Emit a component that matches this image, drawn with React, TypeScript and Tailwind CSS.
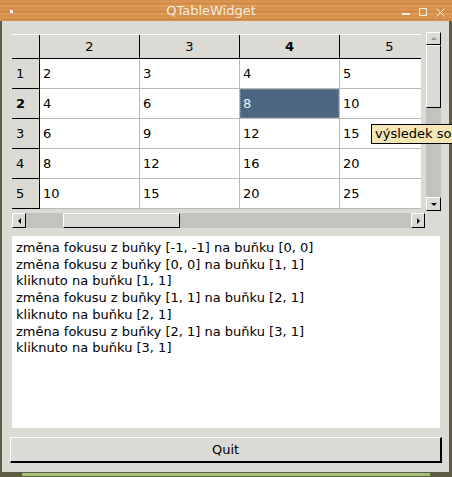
import React from "react";

const font = { fontFamily: '"DejaVu Sans", "Liberation Sans", sans-serif' };

const cols = [2, 3, 4, 5];
const rows = [1, 2, 3, 4, 5];

const log = [
  "změna fokusu z buňky [-1, -1] na buňku [0, 0]",
  "změna fokusu z buňky [0, 0] na buňku [1, 1]",
  "kliknuto na buňku [1, 1]",
  "změna fokusu z buňky [1, 1] na buňku [2, 1]",
  "kliknuto na buňku [2, 1]",
  "změna fokusu z buňky [2, 1] na buňku [3, 1]",
  "kliknuto na buňku [3, 1]",
];

function Arrow({ dir, dim }: { dir: "up" | "down" | "left" | "right"; dim?: boolean }) {
  const pts = {
    up: "0,4 3,1 6,4",
    down: "0,1 6,1 3,4",
    left: "4,0 4,6 1,3",
    right: "1,0 1,6 4,3",
  }[dir];
  const vertical = dir === "up" || dir === "down";
  return (
    <svg width={vertical ? 6 : 5} height={vertical ? 5 : 6} viewBox={vertical ? "0 0 6 5" : "0 0 5 6"}>
      <polygon points={pts} fill={dim ? "#9a9893" : "#000"} />
    </svg>
  );
}

function Btn({ className, children }: { className: string; children?: React.ReactNode }) {
  return (
    <div
      className={`flex items-center justify-center bg-[#dcdad5] border-t border-l border-t-white border-l-white border-b border-r border-b-black border-r-black ${className}`}
    >
      {children}
    </div>
  );
}

export default function App() {
  return (
    <div className="relative w-[452px] h-[477px] bg-[#5d5c45] overflow-hidden" style={font}>
      {/* title bar */}
      <div className="relative h-[21px] flex items-center bg-[repeating-linear-gradient(180deg,#d48a44_0px,#de9c5c_2px,#cf8340_3px,#d99450_5px,#e2a466_6px,#d28944_8px)]">
        <div className="absolute left-[10px] top-[10px] w-[3px] h-[3px] bg-white" />
        <div className="flex-1 text-center text-[13px] text-[#f6ecdf] pr-[30px] leading-none">QTableWidget</div>
        <div className="absolute left-[402px] top-[13px] w-[8px] h-[2px] bg-[#f6ecdf]" />
        <div className="absolute left-[419px] top-[8px] w-[8px] h-[8px] border border-[#f6ecdf]" />
        <svg className="absolute left-[436px] top-[8px]" width="9" height="9" viewBox="0 0 9 9">
          <path d="M0.5 0.5 L8.5 8.5 M8.5 0.5 L0.5 8.5" stroke="#f6ecdf" strokeWidth="1" />
        </svg>
      </div>

      {/* body */}
      <div className="ml-[2px] w-[447px] h-[451px] bg-[#dcdad5] pl-[10px] pt-[11px] flex flex-col">
        <div className="flex">
          <div className="w-[414px] flex flex-col">
            {/* table viewport */}
            <div className="mt-[2px] w-[409px] h-[175px] overflow-hidden text-[13px] text-black">
              <div className="flex h-[25px] border-t border-white bg-[#dcdad5]">
                <div className="w-[28px] shrink-0 border-r border-b border-black" />
                {cols.map((c) => (
                  <div
                    key={c}
                    className={`w-[100px] shrink-0 border-r border-b border-black flex items-center justify-center ${c === 4 ? "font-bold" : ""}`}
                  >
                    {c}
                  </div>
                ))}
              </div>
              {rows.map((r) => (
                <div key={r} className="flex h-[30px]">
                  <div
                    className={`w-[28px] shrink-0 border-r border-b border-black bg-[#dcdad5] flex items-center pl-[4px] ${r === 2 ? "font-bold" : ""}`}
                  >
                    {r}
                  </div>
                  {cols.map((c) => {
                    const sel = r === 2 && c === 4;
                    return (
                      <div
                        key={c}
                        className={`w-[100px] shrink-0 border-r border-b border-[#b9b9b9] flex items-center ${sel ? "bg-white" : "bg-white pl-[3px]"}`}
                      >
                        {sel ? (
                          <div className="w-full h-full bg-[#4b6782] border border-dotted border-[#8a9aaa] text-[#eef2f6] flex items-center pl-[2px]">
                            {r * c}
                          </div>
                        ) : (
                          r * c
                        )}
                      </div>
                    );
                  })}
                </div>
              ))}
            </div>
            {/* horizontal scrollbar */}
            <div className="mt-[4px] w-[413px] h-[15px] flex bg-[#c4c2bd]">
              <Btn className="w-[14px] h-[15px] shrink-0">
                <Arrow dir="left" />
              </Btn>
              <div className="ml-[37px] w-[117px] h-[15px] shrink-0 bg-[#dcdad5] border-t border-l border-white border-b border-r border-b-black border-r-black" />
              <div className="flex-1" />
              <Btn className="w-[14px] h-[15px] shrink-0">
                <Arrow dir="right" />
              </Btn>
            </div>
          </div>
          {/* vertical scrollbar */}
          <div className="w-[15px] h-[179px] flex flex-col bg-[#c4c2bd]">
            <Btn className="w-[15px] h-[13px] shrink-0">
              <Arrow dir="up" dim />
            </Btn>
            <div className="w-[15px] h-[63px] shrink-0 bg-[#dcdad5] border-t border-l border-white border-b border-r border-b-black border-r-black" />
            <div className="flex-1" />
            <Btn className="w-[15px] h-[14px] shrink-0">
              <Arrow dir="down" />
            </Btn>
          </div>
        </div>

        {/* log */}
        <div className="mt-[8px] w-[428px] h-[192px] bg-white pl-[4px] pt-[4px] text-[13px] leading-[16.7px] text-black">
          {log.map((l, i) => (
            <div key={i} className="whitespace-nowrap">
              {l}
            </div>
          ))}
        </div>

        {/* quit */}
        <div className="mt-[9px] -ml-[2px] w-[432px] h-[26px] flex items-center justify-center bg-[#dcdad5] border-t border-l border-white border-b-2 border-r-2 border-b-black border-r-black text-[13px] text-black">
          Quit
        </div>
      </div>

      {/* bottom frame */}
      <div className="h-[5px] pt-[1px]">
        <div className="ml-[22px] w-[408px] h-[3px] bg-[#a4c27a]" />
      </div>

      {/* tooltip, cut by the window edge */}
      <div className="absolute left-[371px] top-[124px] h-[20px] w-[82px] bg-[#f5e6b5] border border-r-0 border-black pl-[3px] text-[13px] text-black leading-[18px] whitespace-nowrap">
        výsledek so
      </div>
    </div>
  );
}
